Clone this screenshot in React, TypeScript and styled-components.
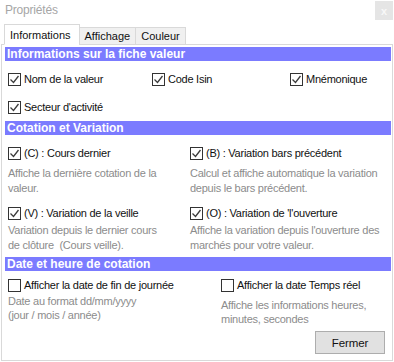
import React from 'react';
import styled, {createGlobalStyle} from 'styled-components';

const COLORS = {
  header: '#7b7bff',
  border: '#d9d9d9',
  label: '#111111',
  desc: '#8c8c8c',
  title: '#a6a6a6',
};

const GlobalStyle = createGlobalStyle`
  *, *::before, *::after {
    box-sizing: border-box;
  }
  html, body {
    margin: 0;
    padding: 0;
    background: #ffffff;
  }
  body {
    font-family: "Liberation Sans", Arial, sans-serif;
    font-size: 11px;
    letter-spacing: -0.25px;
    color: ${COLORS.label};
  }
`;

const Window = styled.div`
  width: 394px;
  height: 362px;
  display: flex;
  flex-direction: column;
  background: #ffffff;
  overflow: hidden;
`;

const TitleBar = styled.div`
  height: 24px;
  display: flex;
  justify-content: space-between;
  align-items: flex-start;
  padding-left: 5px;
`;

const Title = styled.div`
  font-size: 12px;
  letter-spacing: -0.2px;
  line-height: 16px;
  color: ${COLORS.title};
  margin-top: 2px;
`;

const CloseButton = styled.div`
  width: 18px;
  height: 19px;
  margin: 1px 1px 0 0;
  background: #e5e5e5;
  color: #f8f8f8;
  font-weight: bold;
  font-size: 11px;
  display: flex;
  align-items: center;
  justify-content: center;
`;

const TabStrip = styled.div`
  display: flex;
  align-items: flex-end;
  padding-left: 4px;
  height: 20px;
  position: relative;
  z-index: 1;
`;

const Tab = styled.div<{active?: boolean}>`
  height: ${(p) => (p.active ? '21px' : '18px')};
  padding: ${(p) => (p.active ? '0 8px 0 5px' : '0 5px 1px 5px')};
  display: flex;
  align-items: center;
  border: 1px solid ${COLORS.border};
  border-bottom: ${(p) => (p.active ? '1px solid #ffffff' : `1px solid ${COLORS.border}`)};
  background: ${(p) => (p.active ? '#ffffff' : '#f0f0f0')};
  margin-left: ${(p) => (p.active ? '0' : '-1px')};
  margin-bottom: -1px;
  font-size: 11px;
  letter-spacing: 0;
`;

const Panel = styled.div`
  flex: 1;
  margin: 0 1px 1px 1px;
  border: 1px solid ${COLORS.border};
  padding: 2px 1px 0 3px;
  display: flex;
  flex-direction: column;
`;

const SectionHeader = styled.div`
  height: 14px;
  line-height: 14px;
  background: ${COLORS.header};
  color: #ffffff;
  font-weight: bold;
  font-size: 12px;
  letter-spacing: 0;
  padding-left: 2px;
  white-space: nowrap;
`;

const Grid = styled.div<{cols: string; pad: string; rowGap?: number}>`
  display: grid;
  grid-template-columns: ${(p) => p.cols};
  padding: ${(p) => p.pad};
  row-gap: ${(p) => p.rowGap ?? 0}px;
`;

const Item = styled.div`
  display: flex;
  flex-direction: column;
`;

const CheckRow = styled.label`
  display: flex;
  align-items: center;
  gap: 3px;
  height: 14px;
  white-space: nowrap;
`;

const Box = styled.span`
  width: 13px;
  height: 13px;
  border: 1px solid #333333;
  background: #ffffff;
  display: inline-flex;
  align-items: center;
  justify-content: center;
  flex-shrink: 0;
`;

const Desc = styled.div<{top: number; lh?: number}>`
  color: ${COLORS.desc};
  line-height: ${(p) => p.lh ?? 15}px;
  margin-top: ${(p) => p.top}px;
  white-space: nowrap;
`;

const Footer = styled.div`
  display: flex;
  justify-content: flex-end;
  padding: 0 6px 0 0;
  margin-top: auto;
  margin-bottom: 6px;
`;

const Button = styled.div`
  width: 70px;
  height: 23px;
  border: 1px solid #adadad;
  background: #e1e1e1;
  display: flex;
  align-items: center;
  justify-content: center;
  font-size: 11.5px;
  letter-spacing: -0.1px;
`;

const Check: React.FC<{checked?: boolean; label: string}> = ({checked, label}) => (
  <CheckRow>
    <Box>
      {checked && (
        <svg width="11" height="11" viewBox="0 0 11 11">
          <polyline points="1.5,5.5 4.5,8.5 9.5,2" fill="none" stroke="#3c3c3c" strokeWidth="1.3" />
        </svg>
      )}
    </Box>
    <span>{label}</span>
  </CheckRow>
);

const App: React.FC = () => {
  return (
    <Window>
      <GlobalStyle />
      <TitleBar>
        <Title>Propriétés</Title>
        <CloseButton>x</CloseButton>
      </TitleBar>
      <TabStrip>
        <Tab active>Informations</Tab>
        <Tab>Affichage</Tab>
        <Tab>Couleur</Tab>
      </TabStrip>
      <Panel>
        <SectionHeader>Informations sur la fiche valeur</SectionHeader>
        <Grid cols="144px 138px 1fr" pad="11px 0 7px 3px" rowGap={14}>
          <Check checked label="Nom de la valeur" />
          <Check checked label="Code Isin" />
          <Check checked label="Mnémonique" />
          <Check checked label="Secteur d'activité" />
        </Grid>

        <SectionHeader>Cotation et Variation</SectionHeader>
        <Grid cols="182px 1fr" pad="11px 0 4px 3px" rowGap={10}>
          <Item>
            <Check checked label="(C) : Cours dernier" />
            <Desc top={6}>
              Affiche la dernière cotation de la
              <br />
              valeur.
            </Desc>
          </Item>
          <Item>
            <Check checked label="(B) : Variation bars précédent" />
            <Desc top={6}>
              Calcul et affiche automatique la variation
              <br />
              depuis le bars précédent.
            </Desc>
          </Item>
          <Item>
            <Check checked label="(V) : Variation de la veille" />
            <Desc top={3}>
              Variation depuis le dernier cours
              <br />
              de clôture&nbsp; (Cours veille).
            </Desc>
          </Item>
          <Item>
            <Check checked label="(O) : Variation de 'l'ouverture" />
            <Desc top={3}>
              Affiche la variation depuis l'ouverture des
              <br />
              marchés pour votre valeur.
            </Desc>
          </Item>
        </Grid>

        <SectionHeader>Date et heure de cotation</SectionHeader>
        <Grid cols="213px 1fr" pad="7px 0 0 3px">
          <Item>
            <Check label="Afficher la date de fin de journée" />
            <Desc top={2} lh={14}>
              Date au format dd/mm/yyyy
              <br />
              (jour / mois / année)
            </Desc>
          </Item>
          <Item>
            <Check label="Afficher la date Temps réel" />
            <Desc top={6} lh={14}>
              Affiche les informations heures,
              <br />
              minutes, secondes
            </Desc>
          </Item>
        </Grid>
        <Footer>
          <Button>Fermer</Button>
        </Footer>
      </Panel>
    </Window>
  );
};

export default App;
